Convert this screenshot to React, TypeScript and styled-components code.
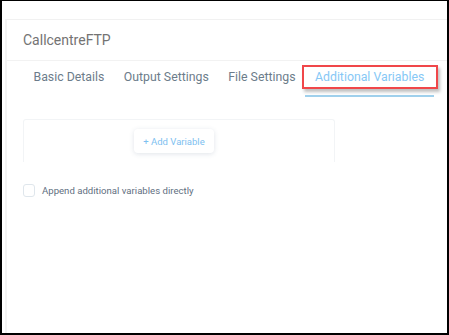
import React from "react";
import styled, { createGlobalStyle } from "styled-components";

const Global = createGlobalStyle`
  html, body { margin: 0; padding: 0; background: #fff; }
  body { font-family: Roboto, "Liberation Sans", Arial, sans-serif; }
  * { box-sizing: border-box; }
`;

const Frame = styled.div`
  width: 449px;
  height: 335px;
  border-style: solid;
  border-color: #000;
  border-width: 1px 2px 2px 2px;
  background: #fff;
  padding: 18px 0 0 3px;
  overflow: hidden;
`;

const Card = styled.div`
  height: 100%;
  border-top: 1px solid #f1f1f1;
  border-left: 2px solid #f3f3f3;
`;

const Header = styled.div`
  height: 41px;
  display: flex;
  align-items: center;
  padding-left: 16px;
  font-size: 14px;
  color: #737373;
  border-bottom: 1px solid #f2f2f2;
`;

const Tabs = styled.div`
  display: flex;
  padding-left: 16.75px;
  height: 36px;
  align-items: stretch;
`;

const TabWrap = styled.div`
  position: relative;
  display: flex;
`;

const Tab = styled.div<{ $active?: boolean }>`
  display: flex;
  align-items: center;
  padding: 0 9.75px 2px;
  font-size: 12.3px;
  color: ${(p) => (p.$active ? "#86c8f6" : "#6c7c8a")};
  border-bottom: 2px solid ${(p) => (p.$active ? "#9fd0ec" : "transparent")};
  white-space: nowrap;
`;

const Highlight = styled.div`
  position: absolute;
  left: -3px;
  right: -4px;
  top: 4px;
  height: 24px;
  border: 2px solid #f0474a;
  box-shadow: 2px 3px 3px rgba(0, 0, 0, 0.25);
  pointer-events: none;
`;

const Body = styled.div`
  padding: 22px 0 0 16px;
`;

const VarBox = styled.div`
  width: 312px;
  height: 43px;
  border: 1px solid #f2f4f6;
  border-bottom: none;
  border-radius: 3px 3px 0 0;
  display: flex;
  justify-content: center;
  padding: 9px 10px 0 0;
`;

const AddButton = styled.button`
  width: 80px;
  height: 24px;
  border: none;
  background: #fff;
  border-radius: 4px;
  box-shadow: 0 1px 5px rgba(60, 90, 120, 0.16);
  font-family: inherit;
  font-size: 9.5px;
  color: #7dc0f0;
  padding: 0;
`;

const CheckRow = styled.label`
  display: flex;
  align-items: center;
  gap: 7px;
  margin-top: 22px;
  font-size: 9.6px;
  color: #5f6f7f;
`;

const Box = styled.span`
  width: 12px;
  height: 13px;
  border: 1px solid #dfe6ec;
  border-radius: 3px;
  background: #fff;
`;

const tabs = ["Basic Details", "Output Settings", "File Settings", "Additional Variables"];

export default function App() {
  return (
    <>
      <Global />
      <Frame>
        <Card>
          <Header>CallcentreFTP</Header>
          <Tabs>
            {tabs.map((t, i) => {
              const active = i === tabs.length - 1;
              return (
                <TabWrap key={t}>
                  <Tab $active={active}>{t}</Tab>
                  {active && <Highlight />}
                </TabWrap>
              );
            })}
          </Tabs>
          <Body>
            <VarBox>
              <AddButton>+ Add Variable</AddButton>
            </VarBox>
            <CheckRow>
              <Box />
              Append additional variables directly
            </CheckRow>
          </Body>
        </Card>
      </Frame>
    </>
  );
}
